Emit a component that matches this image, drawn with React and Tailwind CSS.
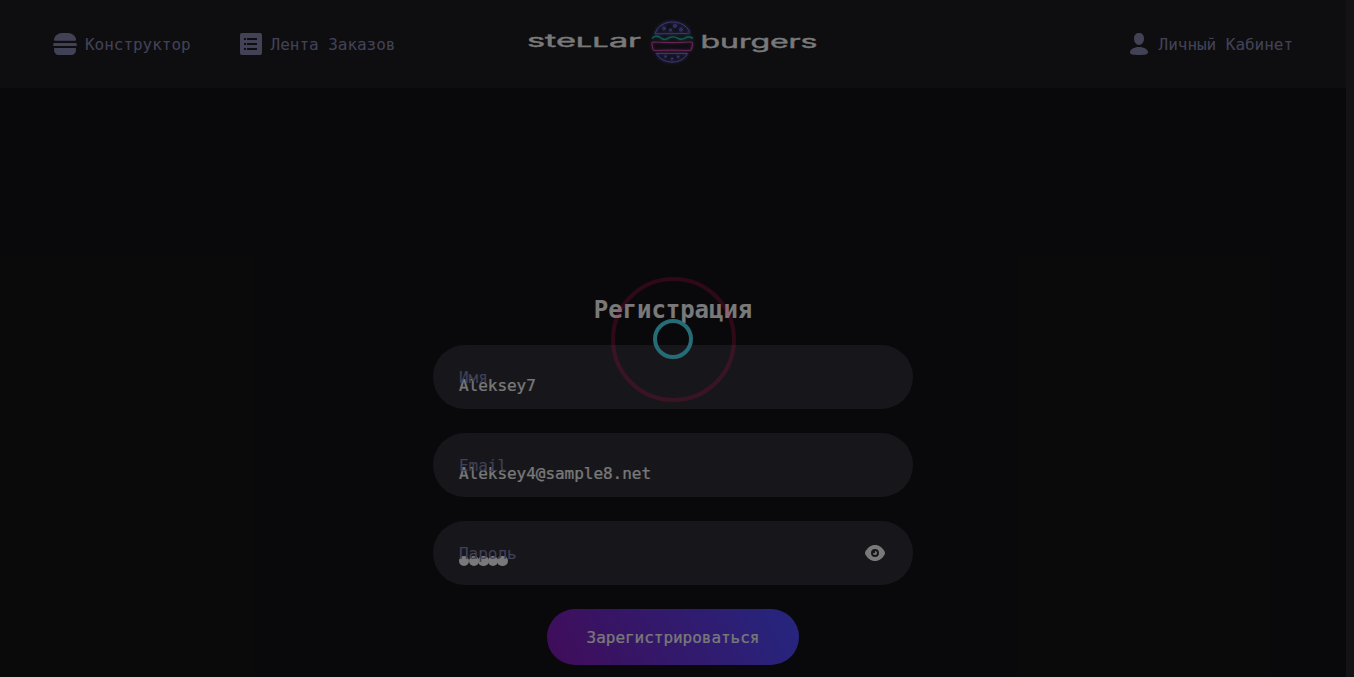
import React from 'react';

function BurgerIcon() {
  return (
    <svg width="24" height="24" viewBox="0 0 24 24" fill="#8585ad">
      <path d="M1 8C1 4 5 1 9 1h6c4 0 8 3 8 7 0 .5-.3.700-1 .700H2c-.7 0-1-.2-1-.7z" />
      <rect x="0" y="11" width="24" height="3" rx="1.500" />
      <path d="M1 17c0-.6.3-1 1-1h20c.7 0 1 .4 1 1 0 4-2 6-5 6H6c-3 0-5-2-5-6z" />
    </svg>
  );
}

function ListIcon() {
  return (
    <svg width="24" height="24" viewBox="0 0 24 24">
      <rect x="1" y="1" width="22" height="22" rx="2" fill="#8585ad" />
      <path d="M5 7h2M8 7h10M5 12h2M8 12h10M5 17h2M8 17h10" stroke="#1c1c21" strokeWidth="2" />
    </svg>
  );
}

function ProfileIcon() {
  return (
    <svg width="24" height="24" viewBox="0 0 24 24" fill="#8585ad">
      <path d="M12 1c3 0 5 2 5 5.500S15 13 12 13s-5-3-5-6.500S9 1 12 1z" />
      <path d="M12 15c5 0 9 2.400 9 5.500C21 22.300 18 23 12 23s-9-.7-9-2.500C3 17.400 7 15 12 15z" />
    </svg>
  );
}

function Logo() {
  return (
    <svg className="block" width="290" height="60" viewBox="0 0 290 60" fill="#f2f2f3">
      <defs>
        <filter id="glow" x="-40%" y="-40%" width="180%" height="180%">
          <feGaussianBlur stdDeviation="1.8" />
        </filter>
        <g id="burger" fill="none" strokeLinecap="round" strokeLinejoin="round">
          <g stroke="#736ef0">
            <path d="M127 22.500c3-8 10-11.500 17.500-11.500S159 14.500 161.500 21c.3 1-.3 1.500-1.500 1.500z" />
            <circle cx="136" cy="17.500" r="1.300" />
            <circle cx="147" cy="15" r="1.400" />
            <circle cx="142.500" cy="19" r="1" />
            <circle cx="153" cy="18.500" r="1.400" />
            <path d="M128.500 42.500h31c-3 6-9 8.500-15.500 8.500s-12.500-2.500-15.500-8.500z" />
            <circle cx="137.500" cy="45.500" r=".8" />
            <circle cx="144" cy="47.500" r=".8" />
            <circle cx="150" cy="45.800" r=".8" />
          </g>
          <path d="M124.500 27c3-3 6.500-1.500 9 .3 3 2 5 1 8-.6s5.500-1 8.500.7 5 .8 7.500-.6 5-.8 7 .2" stroke="#22b8a0" strokeWidth="1.400" />
          <path d="M125.500 31c12 .8 26 .8 37 0 2-.1 2.500 1 2 3l-1 4c-.3 1.300-1 1.500-2.500 1.500-11-.5-23-.5-34 0-1.500 0-2-.5-2.300-1.800l-.8-4.500c-.3-1.500.2-2.200 1.600-2.200z" stroke="#c848ac" strokeWidth="1.200" />
        </g>
      </defs>
      <text x="-1" y="35.500" fontSize="17" stroke="#f2f2f3" strokeWidth=".35" fontFamily="Inter, Roboto, sans-serif" textLength="114" lengthAdjust="spacingAndGlyphs">
        ste<tspan className="[font-variant-caps:small-caps]">ll</tspan>ar
      </text>
      <use href="#burger" filter="url(#glow)" opacity=".75" strokeWidth="1.500" />
      <use href="#burger" />
      <text x="172.500" y="36.500" fontSize="17" stroke="#f2f2f3" strokeWidth=".35" fontFamily="Inter, Roboto, sans-serif" textLength="117" lengthAdjust="spacingAndGlyphs">
        burgers
      </text>
    </svg>
  );
}

function NavItem({ icon, children }) {
  return (
    <a className="flex items-center gap-2 leading-6 text-[#8585ad]">
      {icon}
      <span className="pt-0.5">{children}</span>
    </a>
  );
}

function Field({ label, children, icon }) {
  return (
    <div className="relative flex h-16 w-[480px] items-center rounded-full bg-[#2f2f37] px-[26px]">
      <div className="flex-1 pt-[18px] leading-6 text-[#f2f2f3] [-webkit-text-stroke:0.2px_#f2f2f3]">{children}</div>
      {icon}
      <label className="absolute top-[21px] left-[26px] leading-6 text-[#8080ad]">{label}</label>
    </div>
  );
}

export default function App() {
  return (
    <div className="flex h-[677px] w-full overflow-hidden bg-[#131316] font-['DejaVu_Sans_Mono',monospace] text-base tracking-[-0.032px]">
      <div className="relative flex flex-1 flex-col">
        <header className="grid h-[88px] grid-cols-[1fr_290px_1fr] items-center bg-[#1c1c21] pr-[53px] pl-[53px]">
          <nav className="flex gap-12">
            <NavItem icon={<BurgerIcon />}>Конструктор</NavItem>
            <NavItem icon={<ListIcon />}>Лента Заказов</NavItem>
          </nav>
          <div className="-mt-1.5">
            <Logo />
          </div>
          <div className="flex justify-end">
            <NavItem icon={<ProfileIcon />}>Личный Кабинет</NavItem>
          </div>
        </header>
        <main className="flex flex-1 flex-col items-center pt-[207px]">
          <h1 className="mb-[19px] text-2xl leading-[31px] font-bold tracking-[-0.05px] text-[#f2f2f3]">Регистрация</h1>
          <form className="flex flex-col items-center gap-6">
            <Field label="Имя">Aleksey7</Field>
            <Field label="Email">Aleksey4@sample8.net</Field>
            <Field
              label="Пароль"
              icon={
                <svg width="24" height="24" viewBox="0 0 24 24">
                  <path d="M12 4c4 0 7.500 2.500 9.700 6.800.4.800.4 1.600 0 2.400C19.500 17.500 16 20 12 20s-7.500-2.500-9.700-6.800c-.4-.8-.4-1.600 0-2.400C4.500 6.500 8 4 12 4z" fill="#f2f2f3" />
                  <circle cx="12" cy="12" r="3" fill="#f2f2f3" stroke="#2f2f37" strokeWidth="2" />
                  <circle cx="11" cy="11" r="1.200" fill="#2f2f37" />
                </svg>
              }
            >
              <div className="-mt-0.5 flex h-6 items-center">
                {[0, 1, 2, 3, 4].map((i) => (
                  <span key={i} className="-mr-[0.8px] h-[10.4px] w-[10.4px] rounded-full bg-[#f2f2f3]" />
                ))}
              </div>
            </Field>
            <button type="button" className="h-14 w-[252px] shrink-0 rounded-full bg-[linear-gradient(63.18deg,#801ab3_0%,#4c4cff_100%)] pt-0.5 text-[#f2f2f3] [-webkit-text-stroke:0.2px_#f2f2f3]">
              Зарегистрироваться
            </button>
          </form>
        </main>
        <div className="absolute inset-0 flex items-center justify-center bg-black/50 pt-px">
          <div className="flex h-[125px] w-[125px] items-center justify-center rounded-full border-4 border-[#e60a4c]/18">
            <div className="h-10 w-10 rounded-full border-4 border-[#266c76]" />
          </div>
        </div>
      </div>
      <div className="w-2 bg-[#131316]" />
    </div>
  );
}
